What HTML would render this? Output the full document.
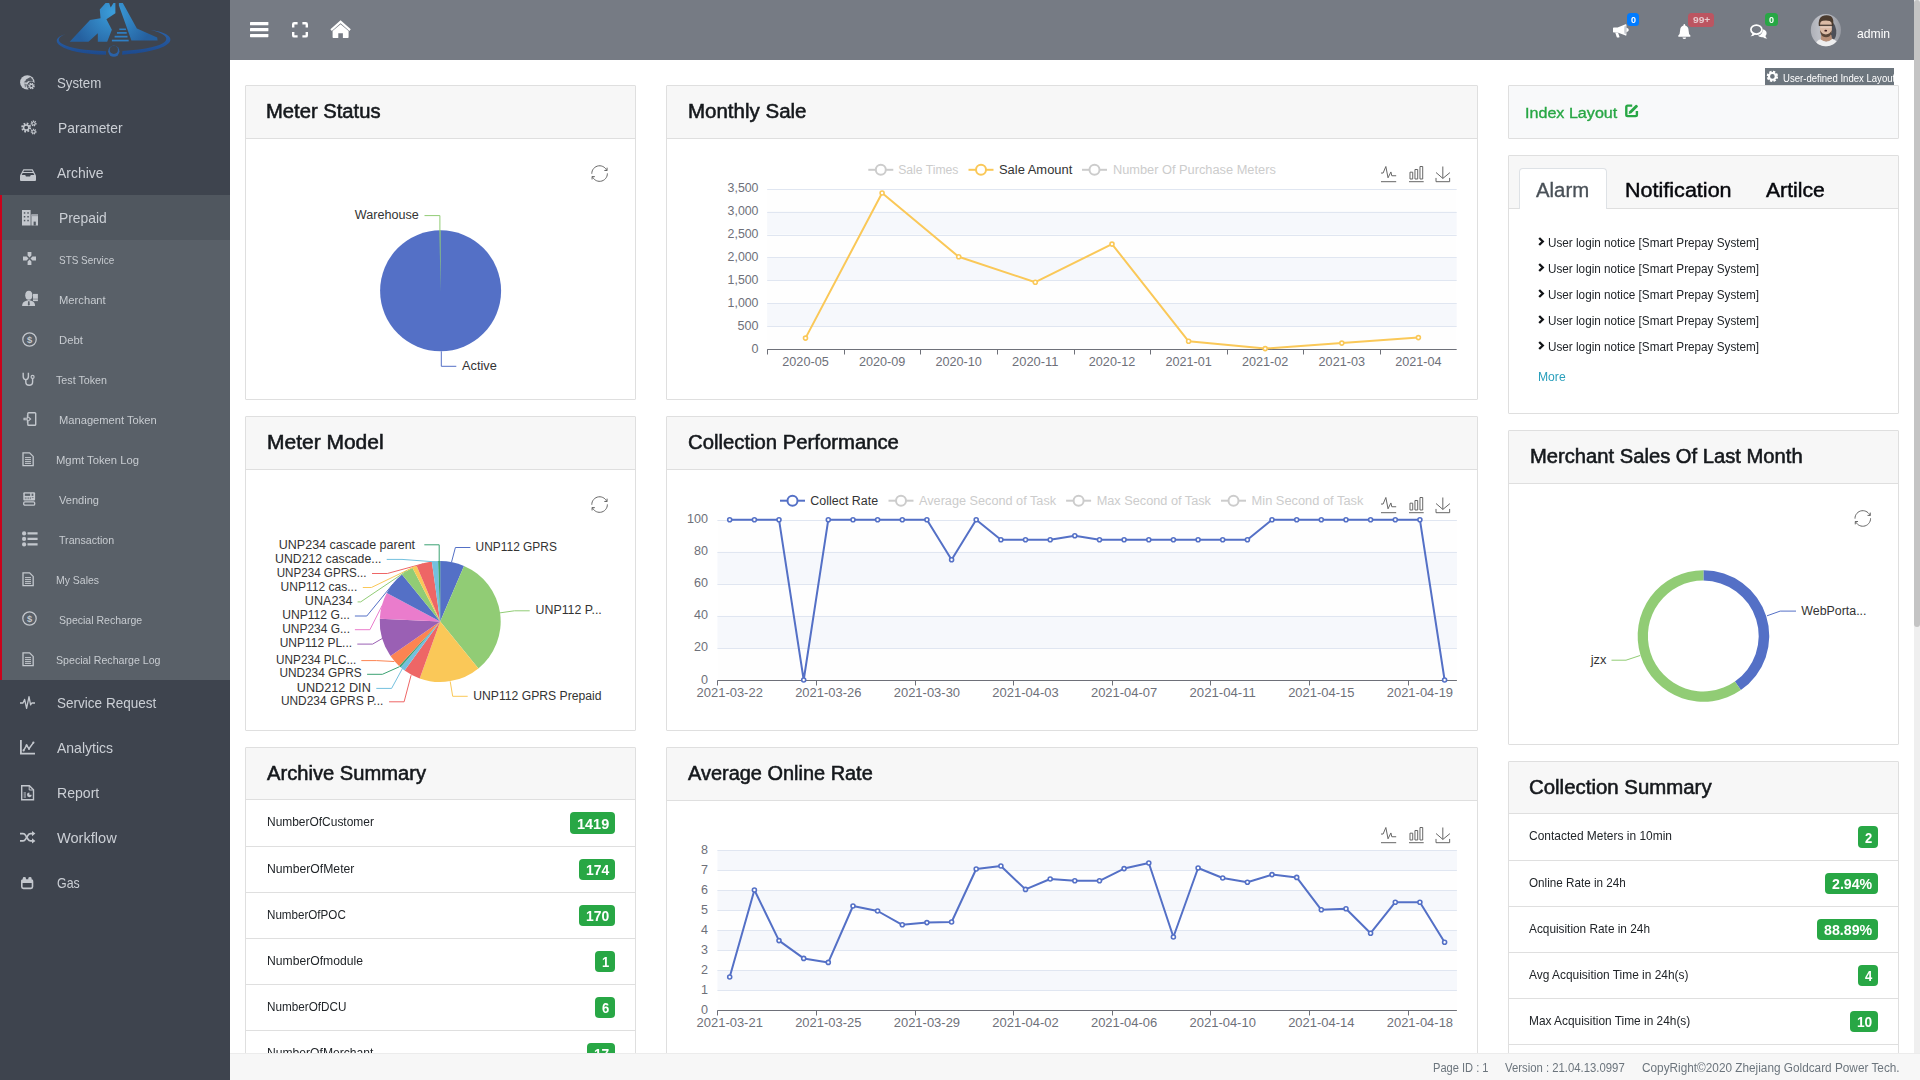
<!DOCTYPE html>
<html lang="en"><head><meta charset="utf-8"><title>Smart Prepay System</title>
<style>
html,body{margin:0;padding:0;}
body{width:1920px;height:1080px;overflow:hidden;position:relative;background:#fff;font-family:"Liberation Sans",sans-serif;}
.t{position:absolute;white-space:nowrap;line-height:1;transform-origin:0 0;}
svg{position:absolute;left:0;top:0;overflow:visible;}
svg text{font-family:"Liberation Sans",sans-serif;}
.card{position:absolute;box-sizing:border-box;border:1px solid #dfdfdf;background:#fff;border-radius:1px;}
.ch{position:absolute;left:0;top:0;right:0;box-sizing:border-box;background:#f7f7f7;border-bottom:1px solid #dfdfdf;}
.row{position:absolute;left:0;right:0;height:1px;background:#dfdfdf;}
.bdg{position:absolute;box-sizing:border-box;background:#28a745;border-radius:4px;color:#fff;font-weight:700;text-align:center;white-space:nowrap;}
</style></head>
<body>
<div style="position:absolute;left:0px;top:0px;width:230px;height:1080px;background:#3e444e;"></div>
<div style="position:absolute;left:0px;top:195px;width:230px;height:45px;background:#50575f;"></div>
<div style="position:absolute;left:0px;top:240px;width:230px;height:440px;background:#596068;"></div>
<div style="position:absolute;left:0px;top:195px;width:2px;height:485px;background:#c9021b;"></div>
<svg width="230" height="64" viewBox="0 0 230 64"><defs><radialGradient id="lgA" cx="113" cy="12" r="42" gradientUnits="userSpaceOnUse"><stop offset="0" stop-color="#3b9edb"/><stop offset="1" stop-color="#25609f"/></radialGradient><linearGradient id="lgB" x1="0" y1="0" x2="0" y2="1"><stop offset="0" stop-color="#2a62a8"/><stop offset="1" stop-color="#1d4a8e"/></linearGradient></defs><polygon points="69.69,41.80 90.00,19.92 100.55,18.36 99.77,9.38 105.62,3.12 109.14,3.12 110.70,7.42 113.44,3.12 115.39,3.12 115.39,13.28 106.41,19.14 111.88,29.69 107.19,41.80 97.81,41.80 97.81,33.20 88.44,41.80" fill="url(#lgA)"/><polygon points="118.91,3.12 122.81,3.12 136.88,28.52 157.19,37.50 157.58,40.62 131.41,40.62 118.91,5.47" fill="url(#lgA)"/><rect x="119.30" y="28.52" width="6.64" height="1.56" fill="#2f7fc4"/><rect x="116.95" y="32.03" width="9.77" height="1.72" fill="#2f7fc4"/><rect x="114.61" y="35.78" width="12.89" height="1.72" fill="#2f7fc4"/><rect x="111.88" y="39.69" width="16.80" height="1.72" fill="#2f7fc4"/><path d="M65.78,33.98 C48.59,40.23 63.44,50.00 106.02,51.17 L106.02,54.69 C59.53,53.91 45.47,39.45 65.78,33.98 Z" fill="url(#lgB)"/><path d="M150.94,30.08 C176.72,36.33 172.03,48.05 122.42,50.94 L122.03,54.69 C175.94,51.56 183.75,34.77 150.94,30.08 Z" fill="url(#lgB)"/><circle cx="113.83" cy="51.17" r="5.6" fill="#2a62a8"/><circle cx="113.83" cy="49.87" r="4.1" fill="#3e444e"/></svg>
<svg style="left:20.4px;top:74.5px" width="15" height="15" viewBox="0 0 15 15"><circle cx="7.3" cy="7.4" r="7.2" fill="#c3c7cd"/><path d="M6 4.4 10.4 2 12.6 4.6 13.2 6.4 10 6.6 8.4 6 6.6 7.4 3.6 7.2 5.4 6Z" fill="#3e444e" opacity=".85"/><path d="M4.2 8.6 7 9.2 6.4 11.4 5 12.6Z" fill="#3e444e" opacity=".55"/><circle cx="11.4" cy="11" r="4.3" fill="#3e444e"/><circle cx="11.4" cy="11" r="2.5" fill="none" stroke="#c3c7cd" stroke-width="1.7" stroke-dasharray="1.25 .71"/><circle cx="11.4" cy="11" r="1.7" fill="none" stroke="#c3c7cd" stroke-width="1.2"/></svg>
<svg style="left:20.5px;top:120.2px" width="16" height="15" viewBox="0 0 16 15"><circle cx="5.2" cy="7.5" r="3.9" fill="none" stroke="#c3c7cd" stroke-width="2.2" stroke-dasharray="1.7 1.36"/><circle cx="5.2" cy="7.5" r="2.6" fill="none" stroke="#c3c7cd" stroke-width="1.5"/><circle cx="12.6" cy="3.4" r="2.2" fill="none" stroke="#c3c7cd" stroke-width="1.5" stroke-dasharray="1.1 .63"/><circle cx="12.6" cy="3.4" r="1.4" fill="none" stroke="#c3c7cd" stroke-width="1"/><circle cx="12.6" cy="11.6" r="2.2" fill="none" stroke="#c3c7cd" stroke-width="1.5" stroke-dasharray="1.1 .63"/><circle cx="12.6" cy="11.6" r="1.4" fill="none" stroke="#c3c7cd" stroke-width="1"/></svg>
<svg style="left:19.5px;top:168.5px" width="16" height="12" viewBox="0 0 16 12"><path d="M0 6.4 L3.4 .3 H12.6 L16 6.4 V11 Q16 12 15 12 H1 Q0 12 0 11Z" fill="#c3c7cd"/><path d="M4 1.6h8l.8 1.5H3.2Z M2.7 4h10.6l1 1.9H10.8L10 7.6H6L5.2 5.9H1.7Z" fill="#3e444e"/></svg>
<svg style="left:21.5px;top:210px" width="16" height="15.5" viewBox="0 0 16 15.5"><rect x="0" y="0" width="8.6" height="15.5" fill="#c3c7cd"/><rect x="9.4" y="4.4" width="6.6" height="11.1" fill="#c3c7cd"/><rect x="9.4" y="4.4" width="6.6" height="1.8" fill="#9da2a9"/><rect x="11.6" y="11.6" width="2.2" height="3.9" fill="#525961"/><rect x="1.8" y="2.2" width="1.5" height="1.5" fill="#525961"/><rect x="1.8" y="6" width="1.5" height="1.5" fill="#525961"/><rect x="1.8" y="9.8" width="1.5" height="1.5" fill="#525961"/><rect x="5.3" y="2.2" width="1.5" height="1.5" fill="#525961"/><rect x="5.3" y="6" width="1.5" height="1.5" fill="#525961"/><rect x="5.3" y="9.8" width="1.5" height="1.5" fill="#525961"/></svg>
<svg style="left:23px;top:252px" width="13" height="13" viewBox="0 0 13 13"><path d="M4.6 0h3.8v3.6L6.5 5.5 4.6 3.6Z M4.6 13h3.8V9.4L6.5 7.5 4.6 9.4Z M0 4.6v3.8h3.6L5.5 6.5 3.6 4.6Z M13 4.6v3.8H9.4L7.5 6.5 9.4 4.6Z" fill="#c3c7cd"/></svg>
<svg style="left:21.5px;top:290.8px" width="16" height="15" viewBox="0 0 16 15"><rect x="11" y="2.9" width="4.9" height="7.2" fill="#c3c7cd"/><path d="M11 8.1h4.9" stroke="#5a6169" stroke-width=".6"/><ellipse cx="6.8" cy="4.3" rx="4.2" ry="5.1" fill="#5a6169"/><ellipse cx="6.8" cy="4.3" rx="3.55" ry="4.5" fill="#c3c7cd"/><path d="M.1 14.9Q.1 11 3.6 10L6.8 9 10 10Q13.1 11 13.1 14.9Z" fill="#c3c7cd"/><path d="M6.1 10.2h1.4l.3 3.6-1 .9-1-.9z" fill="#5a6169"/></svg>
<svg style="left:22px;top:331.5px" width="15" height="15" viewBox="0 0 15 15"><circle cx="7.5" cy="7.5" r="6.7" fill="none" stroke="#c3c7cd" stroke-width="1.25"/><text x="7.5" y="10.7" text-anchor="middle" font-size="9.4" font-weight="700" fill="#c3c7cd">$</text></svg>
<svg style="left:22px;top:371.5px" width="12.5" height="14" viewBox="0 0 12.5 14"><path d="M1.2 .8 V4.6 Q1.2 7.6 3.8 7.6 Q6.4 7.6 6.4 4.6 V.8" fill="none" stroke="#c3c7cd" stroke-width="1.4"/><path d="M3.8 7.6 V10 Q3.8 13.2 7.2 13.2 Q10.6 13.2 10.6 10 V6.3" fill="none" stroke="#c3c7cd" stroke-width="1.4"/><circle cx="10.6" cy="4.9" r="1.5" fill="none" stroke="#c3c7cd" stroke-width="1.2"/></svg>
<svg style="left:23.5px;top:411.5px" width="12.5" height="14" viewBox="0 0 12.5 14"><path d="M3.8 4 V1.6 Q3.8 .7 4.7 .7 H10.8 Q11.7 .7 11.7 1.6 V12.4 Q11.7 13.3 10.8 13.3 H4.7 Q3.8 13.3 3.8 12.4 V10" fill="none" stroke="#c3c7cd" stroke-width="1.4"/><path d="M0 6.2h3.4V4.2L6.6 7 3.4 9.8V7.8H0Z" fill="none" stroke="#c3c7cd" stroke-width="1.1"/></svg>
<svg style="left:21.5px;top:452px" width="12.2" height="14.4" viewBox="0 0 12.2 14.4"><path d="M1 .8h6.6L11.2 4.4V13.6H1Z" fill="none" stroke="#c3c7cd" stroke-width="1.3"/><path d="M3 5.6h6M3 7.6h6M3 9.6h6M3 11.4h6" stroke="#c3c7cd" stroke-width="1"/></svg>
<svg style="left:23.4px;top:491.8px" width="12.4" height="13.6" viewBox="0 0 12.4 13.6"><rect x=".3" y=".2" width="11.8" height="8.3" rx="1" fill="#c3c7cd"/><rect x="1.8" y="1.6" width="5.4" height="2.3" fill="#5a6169"/><rect x="8.6" y="1.6" width="1.8" height="2.3" fill="#5a6169"/><path d="M2.3 5.2v2M4 5.2v2M5.7 5.2v2M7.4 5.2v2" stroke="#5a6169" stroke-width=".7"/><path d="M8.8 5.6h1.8" stroke="#5a6169" stroke-width=".7"/><rect x=".7" y="9.9" width="11" height="3.2" rx="1.2" fill="none" stroke="#c3c7cd" stroke-width="1.3"/></svg>
<svg style="left:21.8px;top:530.6px" width="15.6" height="15.8" viewBox="0 0 15.6 15.8"><circle cx="2.1" cy="2.4" r="2.1" fill="#c3c7cd"/><circle cx="2.1" cy="7.9" r="2.1" fill="#c3c7cd"/><circle cx="2.1" cy="13.4" r="2.1" fill="#c3c7cd"/><path d="M5.5 2.4h10.1M5.5 7.9h10.1M5.5 13.4h10.1" stroke="#c3c7cd" stroke-width="2.2"/></svg>
<svg style="left:21.5px;top:572px" width="12.2" height="14.4" viewBox="0 0 12.2 14.4"><path d="M1 .8h6.6L11.2 4.4V13.6H1Z" fill="none" stroke="#c3c7cd" stroke-width="1.3"/><path d="M3 5.6h6M3 7.6h6M3 9.6h6M3 11.4h6" stroke="#c3c7cd" stroke-width="1"/></svg>
<svg style="left:21.5px;top:611px" width="15" height="15" viewBox="0 0 15 15"><circle cx="7.5" cy="7.5" r="6.7" fill="none" stroke="#c3c7cd" stroke-width="1.25"/><text x="7.5" y="10.7" text-anchor="middle" font-size="9.4" font-weight="700" fill="#c3c7cd">$</text></svg>
<svg style="left:21.5px;top:652px" width="12.2" height="14.4" viewBox="0 0 12.2 14.4"><path d="M1 .8h6.6L11.2 4.4V13.6H1Z" fill="none" stroke="#c3c7cd" stroke-width="1.3"/><path d="M3 5.6h6M3 7.6h6M3 9.6h6M3 11.4h6" stroke="#c3c7cd" stroke-width="1"/></svg>
<svg style="left:20px;top:696px" width="15" height="13" viewBox="0 0 15 13"><path d="M0 7h3l1.6-3.6 2 9L9 .6l1.6 8.2L11.8 7H15" fill="none" stroke="#c3c7cd" stroke-width="1.3" stroke-linejoin="round"/></svg>
<svg style="left:20px;top:740px" width="15" height="14.5" viewBox="0 0 15 14.5"><path d="M.9 0V13.6H15" fill="none" stroke="#c3c7cd" stroke-width="1.8"/><path d="M3.6 10.4 6.6 5.4 9 8.8 13.4 2.6" fill="none" stroke="#c3c7cd" stroke-width="1.5"/><circle cx="3.6" cy="10.4" r="1.1" fill="#c3c7cd"/><circle cx="6.6" cy="5.4" r="1.1" fill="#c3c7cd"/><circle cx="9" cy="8.8" r="1.1" fill="#c3c7cd"/><circle cx="13.4" cy="2.6" r="1.1" fill="#c3c7cd"/></svg>
<svg style="left:21px;top:785px" width="13.2" height="15.4" viewBox="0 0 13.2 15.4"><path d="M.7 .7H8.4L12.5 4.8V14.7H.7Z" fill="none" stroke="#c3c7cd" stroke-width="1.4"/><path d="M8.2 .9V5h4" fill="none" stroke="#c3c7cd" stroke-width="1"/><circle cx="8.4" cy="9.8" r="2.4" fill="#c3c7cd"/><path d="M8.4 9.8V7h2.8v2.8Z" fill="#3e444e"/><path d="M2.6 8h2.4M2.6 10h2.4M2.6 12h2.4" stroke="#c3c7cd" stroke-width="1"/></svg>
<svg style="left:19.5px;top:831px" width="15.5" height="12.5" viewBox="0 0 15.5 12.5"><path d="M0 2.6H3 Q4.6 2.6 5.6 4.4 L8 8.2 Q9 9.9 10.6 9.9 H12.4" fill="none" stroke="#c3c7cd" stroke-width="1.7"/><path d="M0 9.9H3 Q4.6 9.9 5.6 8.1 L8 4.3 Q9 2.6 10.6 2.6 H12.4" fill="none" stroke="#c3c7cd" stroke-width="1.7"/><path d="M12 0 15.4 2.6 12 5.2Z M12 7.3 15.4 9.9 12 12.5Z" fill="#c3c7cd"/></svg>
<svg style="left:21.4px;top:876.7px" width="12.3" height="12.2" viewBox="0 0 12.3 12.2"><rect x=".8" y="3.2" width="10.7" height="8.2" rx="1.6" fill="none" stroke="#c3c7cd" stroke-width="1.6"/><rect x=".2" y="2.6" width="11.9" height="3.4" rx="1" fill="#c3c7cd"/><rect x="1.7" y="0" width="3.3" height="4" rx="1.5" fill="#c3c7cd"/><rect x="7.3" y="0" width="3.3" height="4" rx="1.5" fill="#c3c7cd"/></svg>
<span class="t" style="left:57.25px;top:76.00px;font-size:14.5px;color:#cbcfd5;transform:scaleX(0.9151);">System</span>
<span class="t" style="left:58.25px;top:121.00px;font-size:14.5px;color:#cbcfd5;transform:scaleX(0.9525);">Parameter</span>
<span class="t" style="left:57.25px;top:166.00px;font-size:14.5px;color:#cbcfd5;transform:scaleX(0.9616);">Archive</span>
<span class="t" style="left:59.25px;top:211.00px;font-size:14.5px;color:#cbcfd5;transform:scaleX(0.9559);">Prepaid</span>
<span class="t" style="left:57.25px;top:696.00px;font-size:14.5px;color:#cbcfd5;transform:scaleX(0.9332);">Service Request</span>
<span class="t" style="left:57.25px;top:741.00px;font-size:14.5px;color:#cbcfd5;transform:scaleX(0.9655);">Analytics</span>
<span class="t" style="left:57.25px;top:786.00px;font-size:14.5px;color:#cbcfd5;transform:scaleX(0.9713);">Report</span>
<span class="t" style="left:57.25px;top:831.00px;font-size:14.5px;color:#cbcfd5;transform:scaleX(1.0063);">Workflow</span>
<span class="t" style="left:57.25px;top:876.00px;font-size:14.5px;color:#cbcfd5;transform:scaleX(0.8550);">Gas</span>
<span class="t" style="left:59.00px;top:255.00px;font-size:11.3px;color:#c8ccd1;transform:scaleX(0.8802);">STS Service</span>
<span class="t" style="left:59.25px;top:295.00px;font-size:11.3px;color:#c8ccd1;transform:scaleX(0.9921);">Merchant</span>
<span class="t" style="left:59.25px;top:335.00px;font-size:11.3px;color:#c8ccd1;transform:scaleX(0.9961);">Debt</span>
<span class="t" style="left:56.00px;top:375.00px;font-size:11.3px;color:#c8ccd1;transform:scaleX(0.9482);">Test Token</span>
<span class="t" style="left:59.25px;top:415.00px;font-size:11.3px;color:#c8ccd1;transform:scaleX(0.9869);">Management Token</span>
<span class="t" style="left:55.50px;top:455.00px;font-size:11.3px;color:#c8ccd1;transform:scaleX(0.9960);">Mgmt Token Log</span>
<span class="t" style="left:59.25px;top:495.00px;font-size:11.3px;color:#c8ccd1;transform:scaleX(0.9792);">Vending</span>
<span class="t" style="left:59.25px;top:535.00px;font-size:11.3px;color:#c8ccd1;transform:scaleX(0.9421);">Transaction</span>
<span class="t" style="left:55.50px;top:575.00px;font-size:11.3px;color:#c8ccd1;transform:scaleX(0.9259);">My Sales</span>
<span class="t" style="left:59.25px;top:615.00px;font-size:11.3px;color:#c8ccd1;transform:scaleX(0.9332);">Special Recharge</span>
<span class="t" style="left:55.50px;top:655.00px;font-size:11.3px;color:#c8ccd1;transform:scaleX(0.9398);">Special Recharge Log</span>
<div style="position:absolute;left:230px;top:0px;width:1684px;height:60px;background:#767b84;"></div>
<svg style="left:249.9px;top:21.9px" width="18.4" height="15.2" viewBox="0 0 18.4 15.2"><rect x="0" y="0" width="18.4" height="3.3" rx=".6" fill="#fff"/><rect x="0" y="5.95" width="18.4" height="3.3" rx=".6" fill="#fff"/><rect x="0" y="11.9" width="18.4" height="3.3" rx=".6" fill="#fff"/></svg>
<svg style="left:292px;top:21.9px" width="16" height="15.6" viewBox="0 0 16 15.6"><path d="M1.2 5.6V2.2Q1.2 1.2 2.2 1.2H5.6M10.4 1.2H13.8Q14.8 1.2 14.8 2.2V5.6M14.8 10V13.4Q14.8 14.4 13.8 14.4H10.4M5.6 14.4H2.2Q1.2 14.4 1.2 13.4V10" fill="none" stroke="#fff" stroke-width="2.4"/></svg>
<svg style="left:329.8px;top:19.9px" width="21.2" height="18" viewBox="0 0 21.2 18"><path d="M.4 9.2 10.6 .3 20.8 9.2 19.4 10.9 10.6 3.2 1.8 10.9Z" fill="#fff"/><path d="M2.6 11.1 10.6 4.2 18.6 11.1V17.2Q18.6 17.9 17.9 17.9H12.9V13.2H8.3V17.9H3.3Q2.6 17.9 2.6 17.2Z" fill="#fff"/></svg>
<svg style="left:1612.9px;top:24.3px" width="16" height="14" viewBox="0 0 16 14"><path d="M0 4.2Q0 3.4 .8 3.4H4.6L12.6 .2Q13.4 0 13.4 .8V11Q13.4 11.8 12.6 11.6L4.6 8.6H.8Q0 8.6 0 7.8Z" fill="#fff"/><path d="M13.4 3.8Q15.8 4.4 15.8 6T13.4 8.2Z" fill="#fff"/><path d="M2.2 8.4H5L6.4 12.6Q6.7 13.6 5.8 13.6H4.6Q3.9 13.6 3.7 12.9Z" fill="#fff"/><ellipse cx="12.2" cy="5.9" rx="1" ry="4.4" fill="#c9ccd2"/></svg>
<svg style="left:1677.5px;top:23.8px" width="12.7" height="15" viewBox="0 0 12.7 15"><path d="M6.35 0Q7.2 0 7.2 .9V1.5Q10.6 2.4 10.6 6.6Q10.6 10.2 12.4 11.6Q12.9 12.6 12 12.7H.7Q-.2 12.6 .3 11.6Q2.1 10.2 2.1 6.6Q2.1 2.4 5.5 1.5V.9Q5.5 0 6.35 0Z" fill="#fff"/><path d="M4.5 13.4H8.2Q8 15 6.35 15T4.5 13.4Z" fill="#fff"/></svg>
<svg style="left:1750px;top:24px" width="17.5" height="15.3" viewBox="0 0 17.5 15.3"><path d="M12.6 5.2Q16.6 6 16.6 9.2Q16.6 10.8 15.4 11.9Q15.9 13.6 17.3 14.6Q14.6 14.8 13.1 13.2Q9.6 13.6 7.9 11.8Q12.9 10.6 12.6 5.2Z" fill="#fff"/><ellipse cx="6.4" cy="5.6" rx="5.5" ry="4.5" fill="none" stroke="#fff" stroke-width="1.7"/><path d="M2.6 9.2Q2.3 11.2 .5 12.3Q3.6 12.5 5.2 10.6Z" fill="#fff"/></svg>
<div style="position:absolute;left:1627px;top:13.1px;width:12px;height:13px;background:#007bff;border-radius:3.5px;"></div>
<span class="t" style="left:1630.50px;top:15.00px;font-size:9.6px;color:#fff;font-weight:700;transform:scaleX(0.9384);">0</span>
<div style="position:absolute;left:1688.4px;top:12.9px;width:25.5px;height:14.4px;background:#bc5561;border-radius:3.5px;"></div>
<span class="t" style="left:1692.50px;top:15.00px;font-size:9.6px;color:#e6c9cd;font-weight:700;transform:scaleX(1.0632);">99+</span>
<div style="position:absolute;left:1765.1px;top:13.1px;width:12.9px;height:13px;background:#28a745;border-radius:3.5px;"></div>
<span class="t" style="left:1769.05px;top:15.00px;font-size:9.6px;color:#fff;font-weight:700;transform:scaleX(0.9384);">0</span>
<svg width="1920" height="60" viewBox="0 0 1920 60"><defs><clipPath id="avc"><ellipse cx="1825.9" cy="30.1" rx="15.1" ry="16.2"/></clipPath><linearGradient id="avbg" x1="0" y1="0" x2="1" y2="0"><stop offset="0" stop-color="#a9abb3"/><stop offset=".3" stop-color="#bcbec5"/><stop offset=".62" stop-color="#b0b2b9"/><stop offset="1" stop-color="#8f929b"/></linearGradient><filter id="avbl" x="-20%" y="-20%" width="140%" height="140%"><feGaussianBlur stdDeviation=".55"/></filter></defs><g clip-path="url(#avc)"><rect x="1808" y="12" width="36" height="37" fill="url(#avbg)"/><g filter="url(#avbl)"><path d="M 1831.38,21.45 Q 1836.67,25.11 1836.27,33.26 Q 1835.86,38.97 1832.60,40.60 L 1830.15,37.34 Z" fill="#4d5058"/><path d="M 1814.67,47.12 Q 1815.48,40.60 1821.19,38.97 L 1826.08,41.82 L 1831.78,38.56 Q 1837.90,40.19 1839.12,47.12 Z" fill="#eeeeef"/><path d="M 1821.19,34.89 L 1831.38,34.89 L 1832.19,38.97 Q 1826.49,43.86 1820.78,39.38 Z" fill="#b88f78"/><path d="M 1818.83,25.93 Q 1817.93,18.59 1822.00,16.15 Q 1826.49,14.11 1830.97,16.15 Q 1834.23,18.59 1833.09,25.93 Z" fill="#4b3a2e"/><path d="M 1820.05,25.11 Q 1819.97,21.45 1822.82,20.84 Q 1826.49,20.22 1829.75,21.04 Q 1831.99,21.85 1831.87,25.11 L 1831.87,30.82 Q 1830.97,36.52 1825.88,36.73 Q 1820.78,36.52 1820.05,30.82 Z" fill="#dcbba6"/><path d="M 1820.05,30.00 Q 1820.37,34.89 1822.82,36.52 Q 1826.08,38.15 1829.34,36.52 Q 1831.78,34.49 1831.87,30.00 Q 1830.15,34.08 1825.88,34.49 Q 1821.60,34.08 1820.05,30.00 Z" fill="#5a4538"/><rect x="1819.56" y="24.63" width="12.63" height="1.39" fill="#3a302c" opacity=".85"/><rect x="1820.37" y="26.42" width="11.00" height="1.63" fill="#e9d6cc" opacity=".55"/><ellipse cx="1825.75" cy="30.66" rx="1.39" ry="0.90" fill="#3a1c20"/></g></g></svg>
<span class="t" style="left:1856.90px;top:26.50px;font-size:13px;color:#fff;transform:scaleX(0.9344);">admin</span>
<div style="position:absolute;left:1765px;top:68px;width:129px;height:16.6px;background:#6c757d;overflow:hidden;"></div>
<svg style="left:1766px;top:69.5px" width="12.8" height="12.8" viewBox="0 0 16 16"><circle cx="8" cy="8" r="5.3" fill="none" stroke="#fff" stroke-width="3.6" stroke-dasharray="2.6 1.56"/><circle cx="8" cy="8" r="4.2" fill="none" stroke="#fff" stroke-width="2.6"/></svg>
<div style="position:absolute;left:1765px;top:68px;width:129px;height:16.6px;overflow:hidden;"><span class="t" style="left:17.50px;top:5.00px;font-size:11px;color:#fff;transform:scaleX(0.8696);">User-defined Index Layout</span></div>
<div class="card" style="left:245px;top:85px;width:391px;height:315px"><div class="ch" style="height:53px"></div></div>
<span class="t" style="left:266.40px;top:102.00px;font-size:19.6px;color:#15181c;-webkit-text-stroke:0.55px #15181c;transform:scaleX(1.0312);">Meter Status</span>
<div class="card" style="left:666px;top:85px;width:812px;height:315px"><div class="ch" style="height:53px"></div></div>
<span class="t" style="left:687.50px;top:102.00px;font-size:19.6px;color:#15181c;-webkit-text-stroke:0.55px #15181c;transform:scaleX(1.0460);">Monthly Sale</span>
<div class="card" style="left:245px;top:416px;width:391px;height:315px"><div class="ch" style="height:53px"></div></div>
<span class="t" style="left:266.90px;top:433.00px;font-size:19.6px;color:#15181c;-webkit-text-stroke:0.55px #15181c;transform:scaleX(1.0709);">Meter Model</span>
<div class="card" style="left:666px;top:416px;width:812px;height:315px"><div class="ch" style="height:53px"></div></div>
<span class="t" style="left:687.50px;top:433.00px;font-size:19.6px;color:#15181c;-webkit-text-stroke:0.55px #15181c;transform:scaleX(1.0356);">Collection Performance</span>
<div class="card" style="left:245px;top:747px;width:391px;height:330px"><div class="ch" style="height:52px"></div></div>
<span class="t" style="left:266.60px;top:764.00px;font-size:19.6px;color:#15181c;-webkit-text-stroke:0.55px #15181c;transform:scaleX(1.0288);">Archive Summary</span>
<div class="card" style="left:666px;top:747px;width:812px;height:330px"><div class="ch" style="height:53px"></div></div>
<span class="t" style="left:687.50px;top:764.00px;font-size:19.6px;color:#15181c;-webkit-text-stroke:0.55px #15181c;transform:scaleX(1.0177);">Average Online Rate</span>
<div class="card" style="left:1508px;top:430px;width:391px;height:315px"><div class="ch" style="height:53px"></div></div>
<span class="t" style="left:1529.60px;top:447.00px;font-size:19.6px;color:#15181c;-webkit-text-stroke:0.55px #15181c;transform:scaleX(1.0302);">Merchant Sales Of Last Month</span>
<div class="card" style="left:1508px;top:761px;width:391px;height:330px"><div class="ch" style="height:52px"></div></div>
<span class="t" style="left:1529.30px;top:778.00px;font-size:19.6px;color:#15181c;-webkit-text-stroke:0.55px #15181c;transform:scaleX(1.0415);">Collection Summary</span>
<div class="card" style="left:1508px;top:85px;width:391px;height:54px;background:#f8f9fa"></div>
<span class="t" style="left:1525.20px;top:105.00px;font-size:15.3px;color:#28a745;-webkit-text-stroke:0.35px #28a745;transform:scaleX(1.0537);">Index Layout</span>
<svg style="left:1624.8px;top:103.7px" width="13.6" height="13.3" viewBox="0 0 13.6 13.3"><path d="M7.2 1.6H2.6Q1.3 1.6 1.3 2.9V10.8Q1.3 12.1 2.6 12.1H10.6Q11.9 12.1 11.9 10.8V6.9" fill="none" stroke="#28a745" stroke-width="2.4"/><path d="M3.6 10 4.3 7.2 10.6 .9Q11.2 .4 11.8 .9L12.7 1.8Q13.2 2.4 12.7 3L6.4 9.3Z" fill="#28a745"/></svg>
<div class="card" style="left:1508px;top:155px;width:391px;height:259px"><div class="ch" style="height:53px"></div><div style="position:absolute;left:10px;top:12px;width:88px;height:41px;box-sizing:border-box;background:#fff;border:1px solid #dee2e6;border-bottom:none;border-radius:4px 4px 0 0"></div></div>
<span class="t" style="left:1536.30px;top:181.00px;font-size:19.6px;color:#495057;-webkit-text-stroke:0.3px #495057;transform:scaleX(1.0380);">Alarm</span>
<span class="t" style="left:1624.90px;top:181.00px;font-size:19.6px;color:#07080d;-webkit-text-stroke:0.45px #07080d;transform:scaleX(1.0999);">Notification</span>
<span class="t" style="left:1766.10px;top:181.00px;font-size:19.6px;color:#07080d;-webkit-text-stroke:0.45px #07080d;transform:scaleX(1.0791);">Artilce</span>
<svg style="left:1537.6px;top:237.3px" width="6.4" height="9" viewBox="0 0 6.4 9"><path d="M1.2 1 4.8 4.5 1.2 8" fill="none" stroke="#111316" stroke-width="2.3"/></svg>
<span class="t" style="left:1548.30px;top:237.00px;font-size:12.8px;color:#212529;transform:scaleX(0.9160);">User login notice [Smart Prepay System]</span>
<svg style="left:1537.6px;top:263.3px" width="6.4" height="9" viewBox="0 0 6.4 9"><path d="M1.2 1 4.8 4.5 1.2 8" fill="none" stroke="#111316" stroke-width="2.3"/></svg>
<span class="t" style="left:1548.30px;top:263.00px;font-size:12.8px;color:#212529;transform:scaleX(0.9160);">User login notice [Smart Prepay System]</span>
<svg style="left:1537.6px;top:289.3px" width="6.4" height="9" viewBox="0 0 6.4 9"><path d="M1.2 1 4.8 4.5 1.2 8" fill="none" stroke="#111316" stroke-width="2.3"/></svg>
<span class="t" style="left:1548.30px;top:289.00px;font-size:12.8px;color:#212529;transform:scaleX(0.9160);">User login notice [Smart Prepay System]</span>
<svg style="left:1537.6px;top:315.3px" width="6.4" height="9" viewBox="0 0 6.4 9"><path d="M1.2 1 4.8 4.5 1.2 8" fill="none" stroke="#111316" stroke-width="2.3"/></svg>
<span class="t" style="left:1548.30px;top:315.00px;font-size:12.8px;color:#212529;transform:scaleX(0.9160);">User login notice [Smart Prepay System]</span>
<svg style="left:1537.6px;top:341.3px" width="6.4" height="9" viewBox="0 0 6.4 9"><path d="M1.2 1 4.8 4.5 1.2 8" fill="none" stroke="#111316" stroke-width="2.3"/></svg>
<span class="t" style="left:1548.30px;top:341.00px;font-size:12.8px;color:#212529;transform:scaleX(0.9160);">User login notice [Smart Prepay System]</span>
<span class="t" style="left:1537.60px;top:371.20px;font-size:12.8px;color:#2a9fbc;transform:scaleX(0.9492);">More</span>
<span class="t" style="left:266.60px;top:816.00px;font-size:12.8px;color:#212529;transform:scaleX(0.9337);">NumberOfCustomer</span>
<div class="bdg" style="left:570px;top:812px;width:45px;height:22px"></div>
<span class="t" style="left:576.90px;top:817.00px;font-size:14px;color:#fff;font-weight:700;transform:scaleX(1.0337);">1419</span>
<div style="position:absolute;left:246px;top:846px;width:389px;height:1px;background:#dfdfdf;"></div>
<span class="t" style="left:266.60px;top:863.00px;font-size:12.8px;color:#212529;transform:scaleX(0.9523);">NumberOfMeter</span>
<div class="bdg" style="left:579px;top:859px;width:36px;height:21px"></div>
<span class="t" style="left:585.90px;top:863.00px;font-size:14px;color:#fff;font-weight:700;transform:scaleX(0.9923);">174</span>
<div style="position:absolute;left:246px;top:892px;width:389px;height:1px;background:#dfdfdf;"></div>
<span class="t" style="left:266.60px;top:909.00px;font-size:12.8px;color:#212529;transform:scaleX(0.9080);">NumberOfPOC</span>
<div class="bdg" style="left:579px;top:905px;width:36px;height:21px"></div>
<span class="t" style="left:585.90px;top:909.00px;font-size:14px;color:#fff;font-weight:700;transform:scaleX(0.9923);">170</span>
<div style="position:absolute;left:246px;top:938px;width:389px;height:1px;background:#dfdfdf;"></div>
<span class="t" style="left:266.60px;top:955.00px;font-size:12.8px;color:#212529;transform:scaleX(0.9496);">NumberOfmodule</span>
<div class="bdg" style="left:595px;top:951px;width:20px;height:21px"></div>
<span class="t" style="left:601.90px;top:955.00px;font-size:14px;color:#fff;font-weight:700;transform:scaleX(0.9266);">1</span>
<div style="position:absolute;left:246px;top:984px;width:389px;height:1px;background:#dfdfdf;"></div>
<span class="t" style="left:266.60px;top:1001.00px;font-size:12.8px;color:#212529;transform:scaleX(0.9149);">NumberOfDCU</span>
<div class="bdg" style="left:595px;top:997px;width:20px;height:21px"></div>
<span class="t" style="left:601.90px;top:1001.00px;font-size:14px;color:#fff;font-weight:700;transform:scaleX(0.9266);">6</span>
<div style="position:absolute;left:246px;top:1030px;width:389px;height:1px;background:#dfdfdf;"></div>
<span class="t" style="left:266.60px;top:1047.00px;font-size:12.8px;color:#212529;transform:scaleX(0.9468);">NumberOfMerchant</span>
<div class="bdg" style="left:587px;top:1043px;width:28px;height:21px"></div>
<span class="t" style="left:593.90px;top:1047.00px;font-size:14px;color:#fff;font-weight:700;transform:scaleX(0.9781);">17</span>
<span class="t" style="left:1529.30px;top:830.00px;font-size:12.8px;color:#212529;transform:scaleX(0.9349);">Contacted Meters in 10min</span>
<div class="bdg" style="left:1858px;top:826px;width:20px;height:22px"></div>
<span class="t" style="left:1864.90px;top:831.00px;font-size:14px;color:#fff;font-weight:700;transform:scaleX(0.9266);">2</span>
<div style="position:absolute;left:1509px;top:860px;width:389px;height:1px;background:#dfdfdf;"></div>
<span class="t" style="left:1529.30px;top:877.00px;font-size:12.8px;color:#212529;transform:scaleX(0.9128);">Online Rate in 24h</span>
<div class="bdg" style="left:1825px;top:873px;width:53px;height:21px"></div>
<span class="t" style="left:1831.90px;top:877.00px;font-size:14px;color:#fff;font-weight:700;transform:scaleX(1.0128);">2.94%</span>
<div style="position:absolute;left:1509px;top:906px;width:389px;height:1px;background:#dfdfdf;"></div>
<span class="t" style="left:1529.30px;top:923.00px;font-size:12.8px;color:#212529;transform:scaleX(0.9241);">Acquisition Rate in 24h</span>
<div class="bdg" style="left:1817px;top:919px;width:61px;height:21px"></div>
<span class="t" style="left:1823.90px;top:923.00px;font-size:14px;color:#fff;font-weight:700;transform:scaleX(1.0156);">88.89%</span>
<div style="position:absolute;left:1509px;top:952px;width:389px;height:1px;background:#dfdfdf;"></div>
<span class="t" style="left:1529.30px;top:969.00px;font-size:12.8px;color:#212529;transform:scaleX(0.9317);">Avg Acquisition Time in 24h(s)</span>
<div class="bdg" style="left:1858px;top:965px;width:20px;height:21px"></div>
<span class="t" style="left:1864.90px;top:969.00px;font-size:14px;color:#fff;font-weight:700;transform:scaleX(0.9266);">4</span>
<div style="position:absolute;left:1509px;top:998px;width:389px;height:1px;background:#dfdfdf;"></div>
<span class="t" style="left:1529.30px;top:1015.00px;font-size:12.8px;color:#212529;transform:scaleX(0.9293);">Max Acquisition Time in 24h(s)</span>
<div class="bdg" style="left:1850px;top:1011px;width:28px;height:21px"></div>
<span class="t" style="left:1856.90px;top:1015.00px;font-size:14px;color:#fff;font-weight:700;transform:scaleX(0.9781);">10</span>
<div style="position:absolute;left:1509px;top:1044px;width:389px;height:1px;background:#dfdfdf;"></div>
<span class="t" style="left:1529.30px;top:1061.00px;font-size:12.8px;color:#212529;transform:scaleX(0.9291);">Min Acquisition Time in 24h(s)</span>
<div class="bdg" style="left:1858px;top:1057px;width:20px;height:21px"></div>
<span class="t" style="left:1864.90px;top:1061.00px;font-size:14px;color:#fff;font-weight:700;transform:scaleX(0.9266);">1</span>
<div style="position:absolute;left:0;top:0;width:1914px;height:1053px;overflow:hidden"><svg width="1914" height="1053" viewBox="0 0 1914 1053"><rect x="767.2" y="326.19" width="689.5" height="22.91" fill="#fafafa" fill-opacity=".2"/><rect x="767.2" y="303.27" width="689.5" height="22.91" fill="#d2dbee" fill-opacity=".2"/><rect x="767.2" y="280.36" width="689.5" height="22.91" fill="#fafafa" fill-opacity=".2"/><rect x="767.2" y="257.44" width="689.5" height="22.91" fill="#d2dbee" fill-opacity=".2"/><rect x="767.2" y="234.53" width="689.5" height="22.91" fill="#fafafa" fill-opacity=".2"/><rect x="767.2" y="211.61" width="689.5" height="22.91" fill="#d2dbee" fill-opacity=".2"/><rect x="767.2" y="188.70" width="689.5" height="22.91" fill="#fafafa" fill-opacity=".2"/><path d="M767.2,326.5H1456.7" stroke="#E0E6F1" stroke-width="1"/><path d="M767.2,303.5H1456.7" stroke="#E0E6F1" stroke-width="1"/><path d="M767.2,280.5H1456.7" stroke="#E0E6F1" stroke-width="1"/><path d="M767.2,257.5H1456.7" stroke="#E0E6F1" stroke-width="1"/><path d="M767.2,235.5H1456.7" stroke="#E0E6F1" stroke-width="1"/><path d="M767.2,212.5H1456.7" stroke="#E0E6F1" stroke-width="1"/><path d="M767.2,189.5H1456.7" stroke="#E0E6F1" stroke-width="1"/><text x="758.5" y="352.6" text-anchor="end" textLength="7.0" lengthAdjust="spacingAndGlyphs" font-size="12" fill="#6E7079">0</text><text x="758.5" y="329.7" text-anchor="end" textLength="21.0" lengthAdjust="spacingAndGlyphs" font-size="12" fill="#6E7079">500</text><text x="758.5" y="306.8" text-anchor="end" textLength="30.9" lengthAdjust="spacingAndGlyphs" font-size="12" fill="#6E7079">1,000</text><text x="758.5" y="283.9" text-anchor="end" textLength="30.9" lengthAdjust="spacingAndGlyphs" font-size="12" fill="#6E7079">1,500</text><text x="758.5" y="260.9" text-anchor="end" textLength="30.9" lengthAdjust="spacingAndGlyphs" font-size="12" fill="#6E7079">2,000</text><text x="758.5" y="238.0" text-anchor="end" textLength="30.9" lengthAdjust="spacingAndGlyphs" font-size="12" fill="#6E7079">2,500</text><text x="758.5" y="215.1" text-anchor="end" textLength="30.9" lengthAdjust="spacingAndGlyphs" font-size="12" fill="#6E7079">3,000</text><text x="758.5" y="192.2" text-anchor="end" textLength="30.9" lengthAdjust="spacingAndGlyphs" font-size="12" fill="#6E7079">3,500</text><path d="M767.2,349.5H1456.7" stroke="#6E7079" stroke-width="1"/><path d="M767.5,349.5v5M844.5,349.5v5M920.5,349.5v5M997.5,349.5v5M1074.5,349.5v5M1150.5,349.5v5M1227.5,349.5v5M1303.5,349.5v5M1380.5,349.5v5" stroke="#6E7079" stroke-width="1"/><text x="805.5" y="366.3" text-anchor="middle" textLength="46.4" lengthAdjust="spacingAndGlyphs" font-size="12" fill="#6E7079">2020-05</text><text x="882.1" y="366.3" text-anchor="middle" textLength="46.4" lengthAdjust="spacingAndGlyphs" font-size="12" fill="#6E7079">2020-09</text><text x="958.7" y="366.3" text-anchor="middle" textLength="46.4" lengthAdjust="spacingAndGlyphs" font-size="12" fill="#6E7079">2020-10</text><text x="1035.3" y="366.3" text-anchor="middle" textLength="46.4" lengthAdjust="spacingAndGlyphs" font-size="12" fill="#6E7079">2020-11</text><text x="1112.0" y="366.3" text-anchor="middle" textLength="46.4" lengthAdjust="spacingAndGlyphs" font-size="12" fill="#6E7079">2020-12</text><text x="1188.6" y="366.3" text-anchor="middle" textLength="46.4" lengthAdjust="spacingAndGlyphs" font-size="12" fill="#6E7079">2021-01</text><text x="1265.2" y="366.3" text-anchor="middle" textLength="46.4" lengthAdjust="spacingAndGlyphs" font-size="12" fill="#6E7079">2021-02</text><text x="1341.8" y="366.3" text-anchor="middle" textLength="46.4" lengthAdjust="spacingAndGlyphs" font-size="12" fill="#6E7079">2021-03</text><text x="1418.4" y="366.3" text-anchor="middle" textLength="46.4" lengthAdjust="spacingAndGlyphs" font-size="12" fill="#6E7079">2021-04</text><polyline points="805.5,338.1 882.1,193.0 958.7,256.8 1035.3,282.2 1112.0,244.1 1188.6,341.3 1265.2,348.6 1341.8,343.1 1418.4,337.6" fill="none" stroke="#fac858" stroke-width="2" stroke-linejoin="bevel"/><circle cx="805.5" cy="338.1" r="2" fill="#fff" stroke="#fac858" stroke-width="1.6"/><circle cx="882.1" cy="193.0" r="2" fill="#fff" stroke="#fac858" stroke-width="1.6"/><circle cx="958.7" cy="256.8" r="2" fill="#fff" stroke="#fac858" stroke-width="1.6"/><circle cx="1035.3" cy="282.2" r="2" fill="#fff" stroke="#fac858" stroke-width="1.6"/><circle cx="1112.0" cy="244.1" r="2" fill="#fff" stroke="#fac858" stroke-width="1.6"/><circle cx="1188.6" cy="341.3" r="2" fill="#fff" stroke="#fac858" stroke-width="1.6"/><circle cx="1265.2" cy="348.6" r="2" fill="#fff" stroke="#fac858" stroke-width="1.6"/><circle cx="1341.8" cy="343.1" r="2" fill="#fff" stroke="#fac858" stroke-width="1.6"/><circle cx="1418.4" cy="337.6" r="2" fill="#fff" stroke="#fac858" stroke-width="1.6"/>
<path d="M868.3,169.8h25" stroke="#ccc" stroke-width="2"/><circle cx="880.8" cy="169.8" r="5" fill="#fff" stroke="#ccc" stroke-width="2"/><text x="898.2" y="174.2" textLength="60.2" lengthAdjust="spacingAndGlyphs" font-size="12" fill="#ccc">Sale Times</text><path d="M968.5,169.8h25" stroke="#fac858" stroke-width="2"/><circle cx="981.0" cy="169.8" r="5" fill="#fff" stroke="#fac858" stroke-width="2"/><text x="999.0" y="174.2" textLength="73.3" lengthAdjust="spacingAndGlyphs" font-size="12" fill="#333">Sale Amount</text><path d="M1082.0,169.8h25" stroke="#ccc" stroke-width="2"/><circle cx="1094.5" cy="169.8" r="5" fill="#fff" stroke="#ccc" stroke-width="2"/><text x="1112.9" y="174.2" textLength="162.9" lengthAdjust="spacingAndGlyphs" font-size="12" fill="#ccc">Number Of Purchase Meters</text>
<path d="M4.1,28.9h7.1l9.3-22l7.4,38l9.7-19.7l3,12.8h14.9M4.1,58h51.4" transform="translate(1381.00,166.50) scale(0.2957,0.2975) translate(-4.1,-6.9)" fill="none" stroke="#666" stroke-width="1" vector-effect="non-scaling-stroke"/><path d="M6.7,22.9h10V48h-10V22.9zM24.9,13h10v35h-10V13zM43.2,2h10v46h-10V2zM3.1,58h53.7" transform="translate(1409.00,166.50) scale(0.2737,0.2714) translate(-3.1,-2)" fill="none" stroke="#666" stroke-width="1" vector-effect="non-scaling-stroke"/><path d="M4.7,22.9L29.3,45.5L54.7,23.4M4.6,43.6L4.6,58L53.8,58L53.8,43.6M29.2,45.1L29.2,0" transform="translate(1436.00,166.50) scale(0.2774,0.2621) translate(-4.6,0)" fill="none" stroke="#666" stroke-width="1" vector-effect="non-scaling-stroke"/>
<rect x="717.4" y="647.94" width="739.5" height="32.06" fill="#fafafa" fill-opacity=".2"/><rect x="717.4" y="615.88" width="739.5" height="32.06" fill="#d2dbee" fill-opacity=".2"/><rect x="717.4" y="583.82" width="739.5" height="32.06" fill="#fafafa" fill-opacity=".2"/><rect x="717.4" y="551.76" width="739.5" height="32.06" fill="#d2dbee" fill-opacity=".2"/><rect x="717.4" y="519.70" width="739.5" height="32.06" fill="#fafafa" fill-opacity=".2"/><path d="M717.4,648.5H1456.9" stroke="#E0E6F1" stroke-width="1"/><path d="M717.4,616.5H1456.9" stroke="#E0E6F1" stroke-width="1"/><path d="M717.4,584.5H1456.9" stroke="#E0E6F1" stroke-width="1"/><path d="M717.4,552.5H1456.9" stroke="#E0E6F1" stroke-width="1"/><path d="M717.4,520.5H1456.9" stroke="#E0E6F1" stroke-width="1"/><text x="708.1" y="683.5" text-anchor="end" textLength="7.0" lengthAdjust="spacingAndGlyphs" font-size="12" fill="#6E7079">0</text><text x="708.1" y="651.4" text-anchor="end" textLength="14.0" lengthAdjust="spacingAndGlyphs" font-size="12" fill="#6E7079">20</text><text x="708.1" y="619.4" text-anchor="end" textLength="14.0" lengthAdjust="spacingAndGlyphs" font-size="12" fill="#6E7079">40</text><text x="708.1" y="587.3" text-anchor="end" textLength="14.0" lengthAdjust="spacingAndGlyphs" font-size="12" fill="#6E7079">60</text><text x="708.1" y="555.3" text-anchor="end" textLength="14.0" lengthAdjust="spacingAndGlyphs" font-size="12" fill="#6E7079">80</text><text x="708.1" y="523.2" text-anchor="end" textLength="21.0" lengthAdjust="spacingAndGlyphs" font-size="12" fill="#6E7079">100</text><path d="M717.4,680.5H1456.9" stroke="#6E7079" stroke-width="1"/><path d="M717.5,680.5v5M816.5,680.5v5M915.5,680.5v5M1013.5,680.5v5M1112.5,680.5v5M1210.5,680.5v5M1309.5,680.5v5M1408.5,680.5v5" stroke="#6E7079" stroke-width="1"/><text x="729.7" y="697.2" text-anchor="middle" textLength="66.3" lengthAdjust="spacingAndGlyphs" font-size="12" fill="#6E7079">2021-03-22</text><text x="828.3" y="697.2" text-anchor="middle" textLength="66.3" lengthAdjust="spacingAndGlyphs" font-size="12" fill="#6E7079">2021-03-26</text><text x="926.9" y="697.2" text-anchor="middle" textLength="66.3" lengthAdjust="spacingAndGlyphs" font-size="12" fill="#6E7079">2021-03-30</text><text x="1025.5" y="697.2" text-anchor="middle" textLength="66.3" lengthAdjust="spacingAndGlyphs" font-size="12" fill="#6E7079">2021-04-03</text><text x="1124.1" y="697.2" text-anchor="middle" textLength="66.3" lengthAdjust="spacingAndGlyphs" font-size="12" fill="#6E7079">2021-04-07</text><text x="1222.7" y="697.2" text-anchor="middle" textLength="66.3" lengthAdjust="spacingAndGlyphs" font-size="12" fill="#6E7079">2021-04-11</text><text x="1321.3" y="697.2" text-anchor="middle" textLength="66.3" lengthAdjust="spacingAndGlyphs" font-size="12" fill="#6E7079">2021-04-15</text><text x="1419.9" y="697.2" text-anchor="middle" textLength="66.3" lengthAdjust="spacingAndGlyphs" font-size="12" fill="#6E7079">2021-04-19</text><polyline points="729.7,519.7 754.4,519.7 779.0,519.7 803.7,680.0 828.3,519.7 853.0,519.7 877.6,519.7 902.3,519.7 926.9,519.7 951.6,559.8 976.2,519.7 1000.9,539.7 1025.5,539.7 1050.2,539.7 1074.8,535.7 1099.5,539.7 1124.1,539.7 1148.8,539.7 1173.4,539.7 1198.1,539.7 1222.7,539.7 1247.4,539.7 1272.0,519.7 1296.7,519.7 1321.3,519.7 1346.0,519.7 1370.6,519.7 1395.3,519.7 1419.9,519.7 1444.6,680.0" fill="none" stroke="#5470c6" stroke-width="2" stroke-linejoin="bevel"/><circle cx="729.7" cy="519.7" r="2" fill="#fff" stroke="#5470c6" stroke-width="1.6"/><circle cx="754.4" cy="519.7" r="2" fill="#fff" stroke="#5470c6" stroke-width="1.6"/><circle cx="779.0" cy="519.7" r="2" fill="#fff" stroke="#5470c6" stroke-width="1.6"/><circle cx="803.7" cy="680.0" r="2" fill="#fff" stroke="#5470c6" stroke-width="1.6"/><circle cx="828.3" cy="519.7" r="2" fill="#fff" stroke="#5470c6" stroke-width="1.6"/><circle cx="853.0" cy="519.7" r="2" fill="#fff" stroke="#5470c6" stroke-width="1.6"/><circle cx="877.6" cy="519.7" r="2" fill="#fff" stroke="#5470c6" stroke-width="1.6"/><circle cx="902.3" cy="519.7" r="2" fill="#fff" stroke="#5470c6" stroke-width="1.6"/><circle cx="926.9" cy="519.7" r="2" fill="#fff" stroke="#5470c6" stroke-width="1.6"/><circle cx="951.6" cy="559.8" r="2" fill="#fff" stroke="#5470c6" stroke-width="1.6"/><circle cx="976.2" cy="519.7" r="2" fill="#fff" stroke="#5470c6" stroke-width="1.6"/><circle cx="1000.9" cy="539.7" r="2" fill="#fff" stroke="#5470c6" stroke-width="1.6"/><circle cx="1025.5" cy="539.7" r="2" fill="#fff" stroke="#5470c6" stroke-width="1.6"/><circle cx="1050.2" cy="539.7" r="2" fill="#fff" stroke="#5470c6" stroke-width="1.6"/><circle cx="1074.8" cy="535.7" r="2" fill="#fff" stroke="#5470c6" stroke-width="1.6"/><circle cx="1099.5" cy="539.7" r="2" fill="#fff" stroke="#5470c6" stroke-width="1.6"/><circle cx="1124.1" cy="539.7" r="2" fill="#fff" stroke="#5470c6" stroke-width="1.6"/><circle cx="1148.8" cy="539.7" r="2" fill="#fff" stroke="#5470c6" stroke-width="1.6"/><circle cx="1173.4" cy="539.7" r="2" fill="#fff" stroke="#5470c6" stroke-width="1.6"/><circle cx="1198.1" cy="539.7" r="2" fill="#fff" stroke="#5470c6" stroke-width="1.6"/><circle cx="1222.7" cy="539.7" r="2" fill="#fff" stroke="#5470c6" stroke-width="1.6"/><circle cx="1247.4" cy="539.7" r="2" fill="#fff" stroke="#5470c6" stroke-width="1.6"/><circle cx="1272.0" cy="519.7" r="2" fill="#fff" stroke="#5470c6" stroke-width="1.6"/><circle cx="1296.7" cy="519.7" r="2" fill="#fff" stroke="#5470c6" stroke-width="1.6"/><circle cx="1321.3" cy="519.7" r="2" fill="#fff" stroke="#5470c6" stroke-width="1.6"/><circle cx="1346.0" cy="519.7" r="2" fill="#fff" stroke="#5470c6" stroke-width="1.6"/><circle cx="1370.6" cy="519.7" r="2" fill="#fff" stroke="#5470c6" stroke-width="1.6"/><circle cx="1395.3" cy="519.7" r="2" fill="#fff" stroke="#5470c6" stroke-width="1.6"/><circle cx="1419.9" cy="519.7" r="2" fill="#fff" stroke="#5470c6" stroke-width="1.6"/><circle cx="1444.6" cy="680.0" r="2" fill="#fff" stroke="#5470c6" stroke-width="1.6"/>
<path d="M780.0,500.7h25" stroke="#5470c6" stroke-width="2"/><circle cx="792.5" cy="500.7" r="5" fill="#fff" stroke="#5470c6" stroke-width="2"/><text x="810.3" y="505.1" textLength="67.8" lengthAdjust="spacingAndGlyphs" font-size="12" fill="#333">Collect Rate</text><path d="M888.5,500.7h25" stroke="#ccc" stroke-width="2"/><circle cx="901.0" cy="500.7" r="5" fill="#fff" stroke="#ccc" stroke-width="2"/><text x="919.0" y="505.1" textLength="137.1" lengthAdjust="spacingAndGlyphs" font-size="12" fill="#ccc">Average Second of Task</text><path d="M1066.1,500.7h25" stroke="#ccc" stroke-width="2"/><circle cx="1078.6" cy="500.7" r="5" fill="#fff" stroke="#ccc" stroke-width="2"/><text x="1096.7" y="505.1" textLength="114.3" lengthAdjust="spacingAndGlyphs" font-size="12" fill="#ccc">Max Second of Task</text><path d="M1221.0,500.7h25" stroke="#ccc" stroke-width="2"/><circle cx="1233.5" cy="500.7" r="5" fill="#fff" stroke="#ccc" stroke-width="2"/><text x="1251.6" y="505.1" textLength="111.8" lengthAdjust="spacingAndGlyphs" font-size="12" fill="#ccc">Min Second of Task</text>
<path d="M4.1,28.9h7.1l9.3-22l7.4,38l9.7-19.7l3,12.8h14.9M4.1,58h51.4" transform="translate(1381.00,497.50) scale(0.2957,0.2975) translate(-4.1,-6.9)" fill="none" stroke="#666" stroke-width="1" vector-effect="non-scaling-stroke"/><path d="M6.7,22.9h10V48h-10V22.9zM24.9,13h10v35h-10V13zM43.2,2h10v46h-10V2zM3.1,58h53.7" transform="translate(1409.00,497.50) scale(0.2737,0.2714) translate(-3.1,-2)" fill="none" stroke="#666" stroke-width="1" vector-effect="non-scaling-stroke"/><path d="M4.7,22.9L29.3,45.5L54.7,23.4M4.6,43.6L4.6,58L53.8,58L53.8,43.6M29.2,45.1L29.2,0" transform="translate(1436.00,497.50) scale(0.2774,0.2621) translate(-4.6,0)" fill="none" stroke="#666" stroke-width="1" vector-effect="non-scaling-stroke"/>
<rect x="717.4" y="990.00" width="739.5" height="20.00" fill="#fafafa" fill-opacity=".2"/><rect x="717.4" y="970.00" width="739.5" height="20.00" fill="#d2dbee" fill-opacity=".2"/><rect x="717.4" y="950.00" width="739.5" height="20.00" fill="#fafafa" fill-opacity=".2"/><rect x="717.4" y="930.00" width="739.5" height="20.00" fill="#d2dbee" fill-opacity=".2"/><rect x="717.4" y="910.00" width="739.5" height="20.00" fill="#fafafa" fill-opacity=".2"/><rect x="717.4" y="890.00" width="739.5" height="20.00" fill="#d2dbee" fill-opacity=".2"/><rect x="717.4" y="870.00" width="739.5" height="20.00" fill="#fafafa" fill-opacity=".2"/><rect x="717.4" y="850.00" width="739.5" height="20.00" fill="#d2dbee" fill-opacity=".2"/><path d="M717.4,990.5H1456.9" stroke="#E0E6F1" stroke-width="1"/><path d="M717.4,970.5H1456.9" stroke="#E0E6F1" stroke-width="1"/><path d="M717.4,950.5H1456.9" stroke="#E0E6F1" stroke-width="1"/><path d="M717.4,930.5H1456.9" stroke="#E0E6F1" stroke-width="1"/><path d="M717.4,910.5H1456.9" stroke="#E0E6F1" stroke-width="1"/><path d="M717.4,890.5H1456.9" stroke="#E0E6F1" stroke-width="1"/><path d="M717.4,870.5H1456.9" stroke="#E0E6F1" stroke-width="1"/><path d="M717.4,850.5H1456.9" stroke="#E0E6F1" stroke-width="1"/><text x="708.1" y="1013.5" text-anchor="end" textLength="7.0" lengthAdjust="spacingAndGlyphs" font-size="12" fill="#6E7079">0</text><text x="708.1" y="993.5" text-anchor="end" textLength="7.0" lengthAdjust="spacingAndGlyphs" font-size="12" fill="#6E7079">1</text><text x="708.1" y="973.5" text-anchor="end" textLength="7.0" lengthAdjust="spacingAndGlyphs" font-size="12" fill="#6E7079">2</text><text x="708.1" y="953.5" text-anchor="end" textLength="7.0" lengthAdjust="spacingAndGlyphs" font-size="12" fill="#6E7079">3</text><text x="708.1" y="933.5" text-anchor="end" textLength="7.0" lengthAdjust="spacingAndGlyphs" font-size="12" fill="#6E7079">4</text><text x="708.1" y="913.5" text-anchor="end" textLength="7.0" lengthAdjust="spacingAndGlyphs" font-size="12" fill="#6E7079">5</text><text x="708.1" y="893.5" text-anchor="end" textLength="7.0" lengthAdjust="spacingAndGlyphs" font-size="12" fill="#6E7079">6</text><text x="708.1" y="873.5" text-anchor="end" textLength="7.0" lengthAdjust="spacingAndGlyphs" font-size="12" fill="#6E7079">7</text><text x="708.1" y="853.5" text-anchor="end" textLength="7.0" lengthAdjust="spacingAndGlyphs" font-size="12" fill="#6E7079">8</text><path d="M717.4,1010.5H1456.9" stroke="#6E7079" stroke-width="1"/><path d="M717.5,1010.5v5M816.5,1010.5v5M915.5,1010.5v5M1013.5,1010.5v5M1112.5,1010.5v5M1210.5,1010.5v5M1309.5,1010.5v5M1408.5,1010.5v5" stroke="#6E7079" stroke-width="1"/><text x="729.7" y="1027.2" text-anchor="middle" textLength="66.3" lengthAdjust="spacingAndGlyphs" font-size="12" fill="#6E7079">2021-03-21</text><text x="828.3" y="1027.2" text-anchor="middle" textLength="66.3" lengthAdjust="spacingAndGlyphs" font-size="12" fill="#6E7079">2021-03-25</text><text x="926.9" y="1027.2" text-anchor="middle" textLength="66.3" lengthAdjust="spacingAndGlyphs" font-size="12" fill="#6E7079">2021-03-29</text><text x="1025.5" y="1027.2" text-anchor="middle" textLength="66.3" lengthAdjust="spacingAndGlyphs" font-size="12" fill="#6E7079">2021-04-02</text><text x="1124.1" y="1027.2" text-anchor="middle" textLength="66.3" lengthAdjust="spacingAndGlyphs" font-size="12" fill="#6E7079">2021-04-06</text><text x="1222.7" y="1027.2" text-anchor="middle" textLength="66.3" lengthAdjust="spacingAndGlyphs" font-size="12" fill="#6E7079">2021-04-10</text><text x="1321.3" y="1027.2" text-anchor="middle" textLength="66.3" lengthAdjust="spacingAndGlyphs" font-size="12" fill="#6E7079">2021-04-14</text><text x="1419.9" y="1027.2" text-anchor="middle" textLength="66.3" lengthAdjust="spacingAndGlyphs" font-size="12" fill="#6E7079">2021-04-18</text><polyline points="729.7,977.0 754.4,890.0 779.0,940.6 803.7,958.4 828.3,962.4 853.0,906.0 877.6,911.0 902.3,924.8 926.9,922.6 951.6,922.0 976.2,869.0 1000.9,866.0 1025.5,889.4 1050.2,879.0 1074.8,880.8 1099.5,880.8 1124.1,868.6 1148.8,863.0 1173.4,937.0 1198.1,868.0 1222.7,878.0 1247.4,882.2 1272.0,874.6 1296.7,877.4 1321.3,909.8 1346.0,908.8 1370.6,933.2 1395.3,902.2 1419.9,902.2 1444.6,942.2" fill="none" stroke="#5470c6" stroke-width="2" stroke-linejoin="bevel"/><circle cx="729.7" cy="977.0" r="2" fill="#fff" stroke="#5470c6" stroke-width="1.6"/><circle cx="754.4" cy="890.0" r="2" fill="#fff" stroke="#5470c6" stroke-width="1.6"/><circle cx="779.0" cy="940.6" r="2" fill="#fff" stroke="#5470c6" stroke-width="1.6"/><circle cx="803.7" cy="958.4" r="2" fill="#fff" stroke="#5470c6" stroke-width="1.6"/><circle cx="828.3" cy="962.4" r="2" fill="#fff" stroke="#5470c6" stroke-width="1.6"/><circle cx="853.0" cy="906.0" r="2" fill="#fff" stroke="#5470c6" stroke-width="1.6"/><circle cx="877.6" cy="911.0" r="2" fill="#fff" stroke="#5470c6" stroke-width="1.6"/><circle cx="902.3" cy="924.8" r="2" fill="#fff" stroke="#5470c6" stroke-width="1.6"/><circle cx="926.9" cy="922.6" r="2" fill="#fff" stroke="#5470c6" stroke-width="1.6"/><circle cx="951.6" cy="922.0" r="2" fill="#fff" stroke="#5470c6" stroke-width="1.6"/><circle cx="976.2" cy="869.0" r="2" fill="#fff" stroke="#5470c6" stroke-width="1.6"/><circle cx="1000.9" cy="866.0" r="2" fill="#fff" stroke="#5470c6" stroke-width="1.6"/><circle cx="1025.5" cy="889.4" r="2" fill="#fff" stroke="#5470c6" stroke-width="1.6"/><circle cx="1050.2" cy="879.0" r="2" fill="#fff" stroke="#5470c6" stroke-width="1.6"/><circle cx="1074.8" cy="880.8" r="2" fill="#fff" stroke="#5470c6" stroke-width="1.6"/><circle cx="1099.5" cy="880.8" r="2" fill="#fff" stroke="#5470c6" stroke-width="1.6"/><circle cx="1124.1" cy="868.6" r="2" fill="#fff" stroke="#5470c6" stroke-width="1.6"/><circle cx="1148.8" cy="863.0" r="2" fill="#fff" stroke="#5470c6" stroke-width="1.6"/><circle cx="1173.4" cy="937.0" r="2" fill="#fff" stroke="#5470c6" stroke-width="1.6"/><circle cx="1198.1" cy="868.0" r="2" fill="#fff" stroke="#5470c6" stroke-width="1.6"/><circle cx="1222.7" cy="878.0" r="2" fill="#fff" stroke="#5470c6" stroke-width="1.6"/><circle cx="1247.4" cy="882.2" r="2" fill="#fff" stroke="#5470c6" stroke-width="1.6"/><circle cx="1272.0" cy="874.6" r="2" fill="#fff" stroke="#5470c6" stroke-width="1.6"/><circle cx="1296.7" cy="877.4" r="2" fill="#fff" stroke="#5470c6" stroke-width="1.6"/><circle cx="1321.3" cy="909.8" r="2" fill="#fff" stroke="#5470c6" stroke-width="1.6"/><circle cx="1346.0" cy="908.8" r="2" fill="#fff" stroke="#5470c6" stroke-width="1.6"/><circle cx="1370.6" cy="933.2" r="2" fill="#fff" stroke="#5470c6" stroke-width="1.6"/><circle cx="1395.3" cy="902.2" r="2" fill="#fff" stroke="#5470c6" stroke-width="1.6"/><circle cx="1419.9" cy="902.2" r="2" fill="#fff" stroke="#5470c6" stroke-width="1.6"/><circle cx="1444.6" cy="942.2" r="2" fill="#fff" stroke="#5470c6" stroke-width="1.6"/>
<path d="M4.1,28.9h7.1l9.3-22l7.4,38l9.7-19.7l3,12.8h14.9M4.1,58h51.4" transform="translate(1381.00,827.50) scale(0.2957,0.2975) translate(-4.1,-6.9)" fill="none" stroke="#666" stroke-width="1" vector-effect="non-scaling-stroke"/><path d="M6.7,22.9h10V48h-10V22.9zM24.9,13h10v35h-10V13zM43.2,2h10v46h-10V2zM3.1,58h53.7" transform="translate(1409.00,827.50) scale(0.2737,0.2714) translate(-3.1,-2)" fill="none" stroke="#666" stroke-width="1" vector-effect="non-scaling-stroke"/><path d="M4.7,22.9L29.3,45.5L54.7,23.4M4.6,43.6L4.6,58L53.8,58L53.8,43.6M29.2,45.1L29.2,0" transform="translate(1436.00,827.50) scale(0.2774,0.2621) translate(-4.6,0)" fill="none" stroke="#666" stroke-width="1" vector-effect="non-scaling-stroke"/>
<circle cx="440.6" cy="290.8" r="60.5" fill="#5470c6"/>
<path d="M440.60,290.80L439.4,230.3A60.5,60.5 0 0 1 440.6,230.3Z" fill="#91cc75"/>
<polyline points="424.5,215.6 439.9,215.6 439.9,231.0" fill="none" stroke="#91cc75" stroke-width="1"/>
<polyline points="441.3,351.3 441.3,366.3 456.3,366.3" fill="none" stroke="#5470c6" stroke-width="1"/>
<text x="354.8" y="219.4" textLength="63.9" lengthAdjust="spacingAndGlyphs" font-size="12" fill="#333">Warehouse</text>
<text x="462.1" y="370.0" textLength="34.7" lengthAdjust="spacingAndGlyphs" font-size="12" fill="#333">Active</text>
<path d="M47,18.9h9.8V8.7M56.3,20.1C52.1,9,40.5,0.6,26.8,2.1C12.6,3.7,1.6,16.2,2.1,30.6M13,41.1H3.1v10.2M3.7,39.9c4.2,11.1,15.8,19.5,29.5,18c14.2-1.6,25.2-14.1,24.7-28.5" transform="translate(591.80,165.80) scale(0.2791,0.2771) translate(-2.1,-2)" fill="none" stroke="#666" stroke-width="1" vector-effect="non-scaling-stroke"/>
<path d="M440.20,621.50L440.2,561.0A60.5,60.5 0 0 1 464.0,565.9Z" fill="#5470c6"/>
<path d="M440.20,621.50L464.0,565.9A60.5,60.5 0 0 1 478.4,668.4Z" fill="#91cc75"/>
<path d="M440.20,621.50L478.4,668.4A60.5,60.5 0 0 1 419.7,678.4Z" fill="#fac858"/>
<path d="M440.20,621.50L419.7,678.4A60.5,60.5 0 0 1 404.6,670.4Z" fill="#ee6666"/>
<path d="M440.20,621.50L404.6,670.4A60.5,60.5 0 0 1 400.6,667.2Z" fill="#73c0de"/>
<path d="M440.20,621.50L400.6,667.2A60.5,60.5 0 0 1 399.1,665.9Z" fill="#3ba272"/>
<path d="M440.20,621.50L399.1,665.9A60.5,60.5 0 0 1 390.5,656.0Z" fill="#fc8452"/>
<path d="M440.20,621.50L390.5,656.0A60.5,60.5 0 0 1 379.8,618.8Z" fill="#9a60b4"/>
<path d="M440.20,621.50L379.8,618.8A60.5,60.5 0 0 1 386.8,593.0Z" fill="#ea7ccc"/>
<path d="M440.20,621.50L386.8,593.0A60.5,60.5 0 0 1 402.0,574.6Z" fill="#5470c6"/>
<path d="M440.20,621.50L402.0,574.6A60.5,60.5 0 0 1 412.4,567.8Z" fill="#91cc75"/>
<path d="M440.20,621.50L412.4,567.8A60.5,60.5 0 0 1 416.6,565.8Z" fill="#fac858"/>
<path d="M440.20,621.50L416.6,565.8A60.5,60.5 0 0 1 431.8,561.6Z" fill="#ee6666"/>
<path d="M440.20,621.50L431.8,561.6A60.5,60.5 0 0 1 438.1,561.0Z" fill="#73c0de"/>
<path d="M440.20,621.50L438.1,561.0A60.5,60.5 0 0 1 440.2,561.0Z" fill="#3ba272"/>
<polyline points="424.3,544.8 439.2,544.8 439.2,561.3" fill="none" stroke="#3ba272" stroke-width="1"/>
<polyline points="386.7,559.4 402.0,559.4 435.6,561.9" fill="none" stroke="#73c0de" stroke-width="1"/>
<polyline points="372.0,573.5 387.3,573.5 423.3,563.7" fill="none" stroke="#ee6666" stroke-width="1"/>
<polyline points="362.8,587.5 371.4,587.5 414.8,566.5" fill="none" stroke="#fac858" stroke-width="1"/>
<polyline points="357.6,601.9 360.7,601.9 406.5,571.0" fill="none" stroke="#91cc75" stroke-width="1"/>
<polyline points="354.9,616.0 366.8,616.0 392.8,584.2" fill="none" stroke="#5470c6" stroke-width="1"/>
<polyline points="354.9,629.7 369.9,629.7 382.1,605.6" fill="none" stroke="#ea7ccc" stroke-width="1"/>
<polyline points="357.3,644.1 372.6,644.1 383.6,637.7" fill="none" stroke="#9a60b4" stroke-width="1"/>
<polyline points="361.3,660.6 376.6,660.6 394.3,661.5" fill="none" stroke="#fc8452" stroke-width="1"/>
<polyline points="367.1,674.3 382.4,674.3 399.5,666.7" fill="none" stroke="#3ba272" stroke-width="1"/>
<polyline points="376.3,688.4 391.6,688.4 402.6,668.2" fill="none" stroke="#73c0de" stroke-width="1"/>
<polyline points="389.1,701.8 404.1,701.8 411.1,675.2" fill="none" stroke="#ee6666" stroke-width="1"/>
<polyline points="470.4,547.5 455.4,547.5 451.5,562.2" fill="none" stroke="#5470c6" stroke-width="1"/>
<polyline points="529.7,610.8 514.4,610.8 499.7,612.9" fill="none" stroke="#91cc75" stroke-width="1"/>
<polyline points="467.7,696.3 452.7,696.3 450.2,681.4" fill="none" stroke="#fac858" stroke-width="1"/>
<text x="278.8" y="549.1" textLength="136.3" lengthAdjust="spacingAndGlyphs" font-size="12" fill="#333">UNP234 cascade parent</text>
<text x="275.1" y="563.1" textLength="106.4" lengthAdjust="spacingAndGlyphs" font-size="12" fill="#333">UND212 cascade...</text>
<text x="276.7" y="576.9" textLength="89.8" lengthAdjust="spacingAndGlyphs" font-size="12" fill="#333">UNP234 GPRS...</text>
<text x="280.6" y="590.9" textLength="76.7" lengthAdjust="spacingAndGlyphs" font-size="12" fill="#333">UNP112 cas...</text>
<text x="304.8" y="605.0" textLength="47.7" lengthAdjust="spacingAndGlyphs" font-size="12" fill="#333">UNA234</text>
<text x="282.2" y="618.7" textLength="67.8" lengthAdjust="spacingAndGlyphs" font-size="12" fill="#333">UNP112 G...</text>
<text x="282.2" y="632.8" textLength="67.8" lengthAdjust="spacingAndGlyphs" font-size="12" fill="#333">UNP234 G...</text>
<text x="279.7" y="646.8" textLength="72.4" lengthAdjust="spacingAndGlyphs" font-size="12" fill="#333">UNP112 PL...</text>
<text x="276.1" y="664.0" textLength="80.3" lengthAdjust="spacingAndGlyphs" font-size="12" fill="#333">UNP234 PLC...</text>
<text x="279.4" y="677.4" textLength="82.2" lengthAdjust="spacingAndGlyphs" font-size="12" fill="#333">UND234 GPRS</text>
<text x="296.8" y="691.5" textLength="74.0" lengthAdjust="spacingAndGlyphs" font-size="12" fill="#333">UND212 DIN</text>
<text x="280.9" y="704.9" textLength="102.4" lengthAdjust="spacingAndGlyphs" font-size="12" fill="#333">UND234 GPRS P...</text>
<text x="475.6" y="550.6" textLength="81.3" lengthAdjust="spacingAndGlyphs" font-size="12" fill="#333">UNP112 GPRS</text>
<text x="535.5" y="613.8" textLength="66.3" lengthAdjust="spacingAndGlyphs" font-size="12" fill="#333">UNP112 P...</text>
<text x="473.2" y="699.7" textLength="128.3" lengthAdjust="spacingAndGlyphs" font-size="12" fill="#333">UNP112 GPRS Prepaid</text>
<path d="M47,18.9h9.8V8.7M56.3,20.1C52.1,9,40.5,0.6,26.8,2.1C12.6,3.7,1.6,16.2,2.1,30.6M13,41.1H3.1v10.2M3.7,39.9c4.2,11.1,15.8,19.5,29.5,18c14.2-1.6,25.2-14.1,24.7-28.5" transform="translate(591.80,496.80) scale(0.2791,0.2771) translate(-2.1,-2)" fill="none" stroke="#666" stroke-width="1" vector-effect="non-scaling-stroke"/>
<path d="M1703.4,580.6L1703.4,570.2A65.8,65.8 0 0 1 1740.9,690.1L1734.9,681.5A55.4,55.4 0 0 0 1703.4,580.6Z" fill="#5470c6"/>
<path d="M1734.9,681.5L1740.9,690.1A65.8,65.8 0 1 1 1703.4,570.2L1703.4,580.6A55.4,55.4 0 1 0 1734.9,681.5Z" fill="#91cc75"/>
<polyline points="1796.0,611.1 1780.2,611.1 1767.0,615.8" fill="none" stroke="#5470c6" stroke-width="1"/>
<polyline points="1611.5,660.2 1626.0,660.2 1640.1,655.5" fill="none" stroke="#91cc75" stroke-width="1"/>
<text x="1801.3" y="615.1" textLength="65.2" lengthAdjust="spacingAndGlyphs" font-size="12" fill="#333">WebPorta...</text>
<text x="1590.7" y="663.6" textLength="15.7" lengthAdjust="spacingAndGlyphs" font-size="12" fill="#333">jzx</text>
<path d="M47,18.9h9.8V8.7M56.3,20.1C52.1,9,40.5,0.6,26.8,2.1C12.6,3.7,1.6,16.2,2.1,30.6M13,41.1H3.1v10.2M3.7,39.9c4.2,11.1,15.8,19.5,29.5,18c14.2-1.6,25.2-14.1,24.7-28.5" transform="translate(1855.00,510.70) scale(0.2791,0.2771) translate(-2.1,-2)" fill="none" stroke="#666" stroke-width="1" vector-effect="non-scaling-stroke"/></svg></div>
<div style="position:absolute;left:1914px;top:0px;width:6px;height:1053px;background:#efefef;"></div>
<div style="position:absolute;left:1914px;top:0px;width:6px;height:627px;background:#c4c4c4;border-radius:3px;"></div>
<div style="position:absolute;left:230px;top:1053px;width:1690px;height:27px;background:#f7f7f7;border-top:1px solid #ececec;box-sizing:border-box;"></div>
<span class="t" style="left:1432.80px;top:1062.20px;font-size:12px;color:#6c757d;transform:scaleX(0.9241);">Page ID : 1</span>
<span class="t" style="left:1505.10px;top:1062.20px;font-size:12px;color:#6c757d;transform:scaleX(0.9442);">Version : 21.04.13.0997</span>
<span class="t" style="left:1641.60px;top:1062.20px;font-size:12px;color:#6c757d;transform:scaleX(0.9829);">CopyRight©2020 Zhejiang Goldcard Power Tech.</span>
</body></html>
